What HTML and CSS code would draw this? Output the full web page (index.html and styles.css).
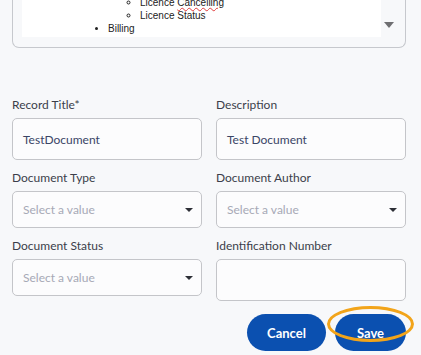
FILE: index.html
```html
<!DOCTYPE html>
<html lang="en">

<head>
    <meta charset="UTF-8">
    <meta name="viewport" content="width=device-width, initial-scale=1.0">
    <link rel="stylesheet" href="styles.css">
    <title>Record</title>
</head>

<body>
    <div class="page">
        <div class="editor">
            <div class="editorbody">
                <ul class="outer">
                    <li>Licensing
                        <ul class="inner">
                            <li>Licence <span class="typo">Cancelling</span></li>
                            <li>Licence Status</li>
                        </ul>
                    </li>
                    <li>Billing</li>
                </ul>
            </div>
            <div class="editorscroll"><span class="scrollarrow"></span></div>
        </div>

        <div class="formgrid">
            <div class="field">
                <label>Record Title*</label>
                <div class="input">TestDocument</div>
            </div>
            <div class="field">
                <label>Description</label>
                <div class="input">Test Document</div>
            </div>
            <div class="field">
                <label>Document Type</label>
                <div class="select"><span>Select a value</span><i class="caret"></i></div>
            </div>
            <div class="field">
                <label>Document Author</label>
                <div class="select"><span>Select a value</span><i class="caret"></i></div>
            </div>
            <div class="field">
                <label>Document Status</label>
                <div class="select"><span>Select a value</span><i class="caret"></i></div>
            </div>
            <div class="field">
                <label>Identification Number</label>
                <div class="input"></div>
            </div>
        </div>

        <div class="actions">
            <button class="btn">Cancel</button>
            <button class="btn focused">Save</button>
        </div>
    </div>
</body>

</html>
```

FILE: styles.css
```css
* {
    margin: 0;
    padding: 0;
    box-sizing: border-box;
}

body {
    background-color: #f7f8fa;
    font-family: Lato, "Noto Sans", sans-serif;
    color: #3b3e4a;
    overflow: hidden;
}

.page {
    padding: 0 15px 0 12px;
}

/* rich text box, scrolled to the bottom */
.editor {
    display: flex;
    height: 58px;
    margin-top: -10px;
    border: 1px solid #c6c8cd;
    border-top: none;
    border-radius: 0 0 7px 7px;
    padding: 0 0 10px 9px;
}

.editorbody {
    flex: 1;
    background-color: #fff;
    overflow: hidden;
    font-family: "Liberation Sans", Arial, sans-serif;
    font-size: 10px;
    line-height: 13px;
    color: #222;
}

.outer {
    padding-left: 86px;
    margin-top: -7px;
}

.inner {
    list-style-type: circle;
    padding-left: 32px;
}

.typo {
    text-decoration: underline wavy #e03c3c;
    text-decoration-thickness: 1px;
}

.editorscroll {
    width: 24px;
    display: flex;
    align-items: flex-end;
    padding: 0 0 9px 3px;
}

.scrollarrow {
    width: 0;
    height: 0;
    border-left: 5px solid transparent;
    border-right: 5px solid transparent;
    border-top: 6px solid #6f6f72;
}

.formgrid {
    display: grid;
    grid-template-columns: 1fr 1fr;
    column-gap: 14px;
    row-gap: 10px;
    margin-top: 49px;
    align-items: start;
}

.field label {
    display: block;
    font-size: 12px;
    line-height: 16px;
    margin-bottom: 5px;
    color: #3b3e4a;
}

.input,
.select {
    background-color: #fcfcfd;
    border: 1px solid #c4c5c9;
    border-radius: 5px;
    padding: 0 10px;
    font-size: 12px;
    display: flex;
    align-items: center;
}

.input {
    height: 42px;
    color: #3a4566;
}

.select {
    height: 37px;
    color: #a7a9b6;
    justify-content: space-between;
    margin-top: 1px;
}

.caret {
    width: 0;
    height: 0;
    border-left: 4px solid transparent;
    border-right: 4px solid transparent;
    border-top: 4px solid #2d2f36;
    margin-right: -2px;
}

.actions {
    display: flex;
    justify-content: flex-end;
    gap: 9px;
    margin-top: 13px;
}

.btn {
    height: 37px;
    border: none;
    border-radius: 19px;
    background-color: #0b50b0;
    color: #fff;
    font-family: Lato, "Noto Sans", sans-serif;
    font-weight: bold;
    font-size: 13px;
    width: 79px;
}

.btn.focused {
    width: 71px;
    position: relative;
}

.btn.focused::after {
    content: "";
    position: absolute;
    top: -8px;
    left: -8px;
    right: -8px;
    bottom: 9px;
    border: 3px solid #f2a41a;
    border-radius: 50%;
}
```
